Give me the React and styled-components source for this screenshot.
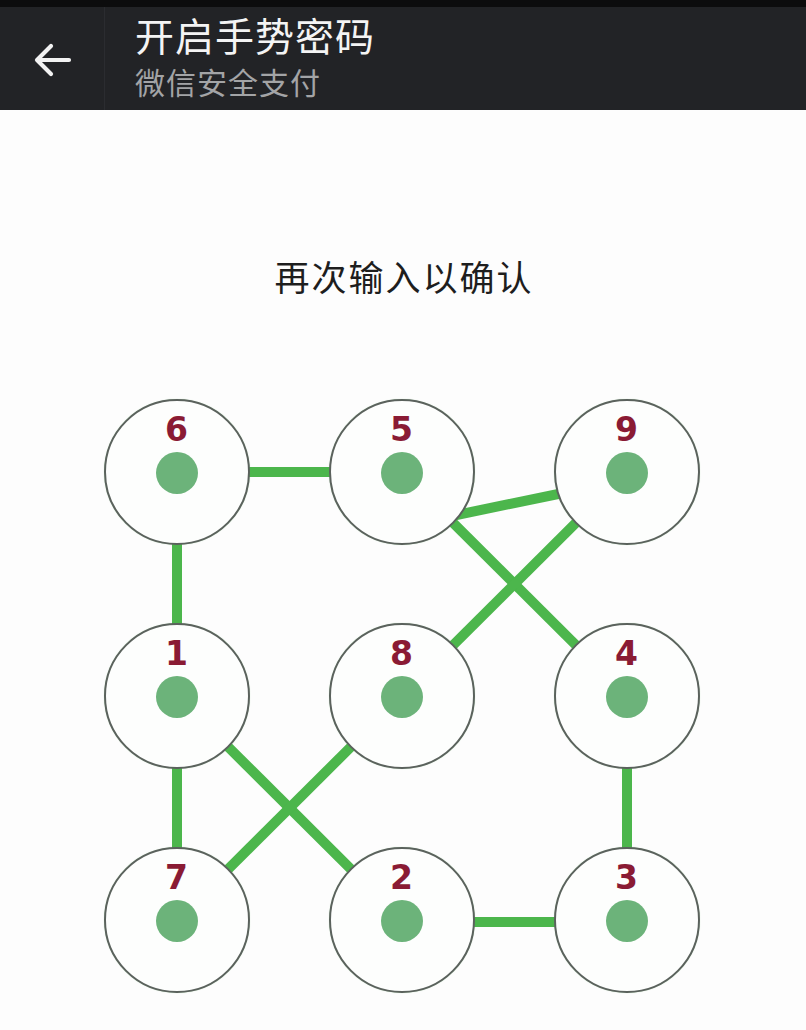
import React from "react";
import styled, { createGlobalStyle } from "styled-components";

const GlobalStyle = createGlobalStyle`
  html, body { margin: 0; padding: 0; background: #fdfdfd; }
  body { font-family: "Noto Sans CJK SC", "Noto Sans", sans-serif; }
  * { box-sizing: border-box; }
`;

const Page = styled.div`
  width: 806px;
  height: 1030px;
  overflow: hidden;
  background: #fdfdfd;
`;

const Header = styled.header`
  height: 110px;
  background: #222326;
  border-top: 7px solid #0c0c0d;
  display: flex;
  align-items: stretch;
`;

const BackButton = styled.div`
  width: 105px;
  display: flex;
  align-items: center;
  justify-content: center;
  border-right: 1px solid #2b2c30;
  padding-left: 2px;
  padding-top: 2px;
`;

const TitleBlock = styled.div`
  display: flex;
  flex-direction: column;
  padding-left: 30px;
  padding-top: 5px;
`;

const Title = styled.h1`
  margin: 0;
  font-size: 39px;
  line-height: 44px;
  font-weight: 400;
  color: #f4f4f4;
  letter-spacing: 1px;
`;

const Subtitle = styled.div`
  margin-top: 8px;
  font-size: 30px;
  line-height: 34px;
  color: #a3a4a6;
  letter-spacing: 1px;
`;

const Content = styled.main`
  display: flex;
  flex-direction: column;
  align-items: center;
  padding-top: 146px;
`;

const Prompt = styled.div`
  font-size: 35px;
  line-height: 40px;
  color: #1e1e1e;
  letter-spacing: 2px;
  padding-left: 2px;
`;

const Board = styled.div`
  position: relative;
  margin-top: 103px;
  width: 596px;
  margin-left: -3px;
`;

const Lines = styled.svg`
  position: absolute;
  left: 0;
  top: 0;
  width: 596px;
  height: 596px;
  overflow: visible;
`;

const Grid = styled.div`
  position: relative;
  display: grid;
  grid-template-columns: repeat(3, 146px);
  grid-auto-rows: 146px;
  column-gap: 79px;
  row-gap: 78px;
`;

const Node = styled.div`
  width: 146px;
  height: 146px;
  border-radius: 50%;
  border: 2px solid #5b625d;
  background: #fdfefd;
  display: flex;
  flex-direction: column;
  align-items: center;
  padding-top: 11px;
  box-shadow: 0 0 1px rgba(90, 180, 90, 0.4);
`;

const Number = styled.span`
  font-family: "DejaVu Sans", "Liberation Sans", sans-serif;
  font-weight: 700;
  font-size: 33px;
  line-height: 36px;
  color: #8a1b34;
`;

const Dot = styled.span`
  margin-top: 4px;
  width: 42px;
  height: 42px;
  border-radius: 50%;
  background: #6cb37a;
`;

const nodes = ["6", "5", "9", "1", "8", "4", "7", "2", "3"];

// centers relative to the board (col/row spacing 225 / 224)
const C = [73, 298, 523];
const R = [73, 297, 521];

const segments = [
  [C[0], R[0], C[1], R[0]],
  [C[0], R[0], C[0], R[1]],
  [C[0], R[1], C[0], R[2]],
  [C[0], R[1], C[1], R[2]],
  [C[0], R[2], C[1], R[1]],
  [C[1], R[0], C[2], R[1]],
  [C[1], R[1], C[2], R[0]],
  [C[1] + 40, R[0] + 46, C[2] - 30, R[0] + 14],
  [C[2], R[1], C[2], R[2]],
  [C[1], R[2] + 2, C[2], R[2] + 2],
];

export default function App() {
  return (
    <>
      <GlobalStyle />
      <Page>
        <Header>
          <BackButton>
            <svg width="40" height="36" viewBox="0 0 40 36" fill="none">
              <path
                d="M36 18H5M18 4L4 18l14 14"
                stroke="#f2f2f2"
                strokeWidth="4.2"
                strokeLinecap="round"
                strokeLinejoin="round"
              />
            </svg>
          </BackButton>
          <TitleBlock>
            <Title>开启手势密码</Title>
            <Subtitle>微信安全支付</Subtitle>
          </TitleBlock>
        </Header>
        <Content>
          <Prompt>再次输入以确认</Prompt>
          <Board>
            <Lines viewBox="0 0 596 596">
              {segments.map(([x1, y1, x2, y2], i) => (
                <line
                  key={i}
                  x1={x1}
                  y1={y1}
                  x2={x2}
                  y2={y2}
                  stroke="#4cb64c"
                  strokeWidth="10"
                />
              ))}
            </Lines>
            <Grid>
              {nodes.map((n) => (
                <Node key={n}>
                  <Number>{n}</Number>
                  <Dot />
                </Node>
              ))}
            </Grid>
          </Board>
        </Content>
      </Page>
    </>
  );
}
